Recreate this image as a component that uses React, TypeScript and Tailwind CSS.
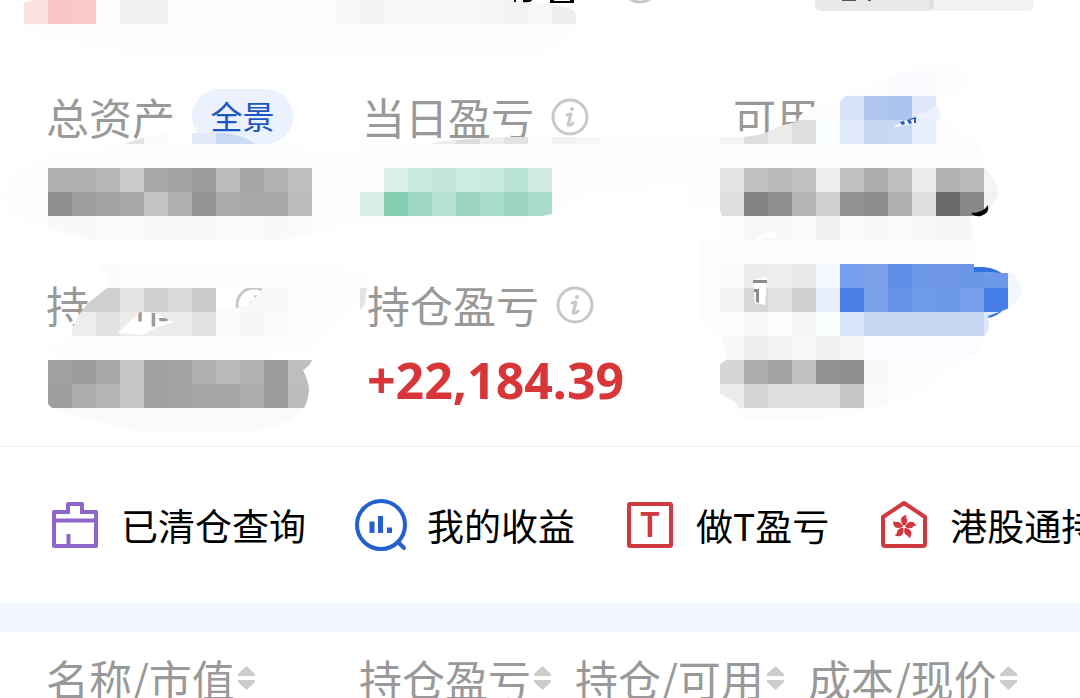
import type { ReactNode } from 'react'

const CELL = 24

type MosaicRow = { x: number; y: number; colors: string[] }

const topRows: MosaicRow[] = [
  { x: 24, y: 0, colors: ['#fbe2e2', '#f8c5c7', '#f9c9cb', '#fffcfc', '#f1f1f1', '#f0f0f0'] },
  {
    x: 336,
    y: 0,
    colors: ['#f9f9f9', '#f3f3f3', '#f7f7f7', '#f7f7f7', '#f7f7f7', '#f9f9f9', '#f5f5f5', '#f3f3f3', '#f8f8f8', '#efefef'],
  },
]

const totalRows: MosaicRow[] = [
  { x: 120, y: 120, colors: ['#e4e4e4', '#fafafa', '#ffffff', '#e3ebfb', '#c9d8f4', '#ccdaf3'] },
  {
    x: 48,
    y: 168,
    colors: ['#b0b0b0', '#b0b0b0', '#b8b8b8', '#cbcbcb', '#a8a8a8', '#a3a3a3', '#9b9b9b', '#bdbdbd', '#a5a5a5', '#b2b2b2', '#bfbfbf'],
  },
  {
    x: 48,
    y: 192,
    colors: ['#8e8e8e', '#9d9d9d', '#a2a2a2', '#a9a9a9', '#c4c4c4', '#b0b0b0', '#959595', '#ababab', '#a7a7a7', '#a9a9a9', '#bdbdbd'],
  },
  {
    x: 48,
    y: 216,
    colors: ['#f9f9f9', '#f9f9f9', '#fafafa', '#fbfbfb', '#f9f9f9', '#f9f9f9', '#f8f8f8', '#fafafa', '#fafafa', '#f9f9f9', '#fafafa'],
  },
]

const todayRows: MosaicRow[] = [
  { x: 432, y: 120, colors: ['#ececec', '#dedede', '#eeeeee', '#e3e3e3', '#fdfdfd', '#f2f2f2', '#f7f7f7'] },
  { x: 384, y: 168, colors: ['#d9f0e7', '#c9eade', '#c2e7da', '#cdece2', '#c6eadf', '#b7e2d4', '#cfebe1'] },
  { x: 360, y: 192, colors: ['#d8efe7', '#85cdb1', '#9dd6c2', '#b5e0d2', '#9cd6c2', '#aadccb', '#9ad4be', '#aadccb'] },
]

const availableRows: MosaicRow[] = [
  { x: 888, y: 72, colors: ['#f8fafe', '#f8fafe'] },
  { x: 840, y: 96, colors: ['#d8e3f8', '#b0c6ed', '#abc4ee', '#dfe8f9'] },
  { x: 720, y: 120, colors: ['#f5f5f5', '#dedede', '#ebebeb', '#dedede', '#fafdff', '#e0e9fb', '#c5d6f3', '#c9d9f5', '#e6edfc'] },
  {
    x: 720,
    y: 168,
    colors: ['#e5e5e5', '#c1c1c1', '#bababa', '#c0c0c0', '#ededed', '#c2c2c2', '#adadad', '#bebebe', '#ebeded', '#b2b2b2', '#b9b9b9', '#f5f5f5'],
  },
  {
    x: 720,
    y: 192,
    colors: ['#dedede', '#828282', '#8e8e8e', '#b5b5b5', '#cfcfcf', '#929292', '#8c8c8c', '#b0b0b0', '#dfdfdf', '#696969', '#888888', '#f2f2f2'],
  },
]

const availableTail: MosaicRow[] = [
  {
    x: 720,
    y: 216,
    colors: ['#fcfcfc', '#f7f7f7', '#f8f8f8', '#fafafa', '#f0f0f0', '#fafafa', '#f8f8f8', '#fafafa', '#f9f9f9', '#f6f6f6', '#f6f6f6'],
  },
]

const marketRows: MosaicRow[] = [
  { x: 72, y: 264, colors: ['#fdfdfd', '#fbfbfb', '#fefefe', '#fcfcfc'] },
  { x: 72, y: 288, colors: ['#d0d0d0', '#cfcfcf', '#e4e4e4', '#cfcfcf', '#dbdbdb', '#cccccc', '#fcfcfc', '#f8f8f8', '#f7f7f7'] },
  { x: 72, y: 312, colors: ['#ededed', '#e2e2e2', '#ececec', '#ececec', '#ececec', '#e2e2e2', '#fafafa', '#f5f5f5', '#fafafa'] },
]

const marketValueRows: MosaicRow[] = [
  {
    x: 48,
    y: 360,
    colors: ['#a0a0a0', '#9b9b9b', '#a9a9a9', '#c6c6c6', '#a0a0a0', '#a4a4a4', '#afafaf', '#bababa', '#b2b2b2', '#9b9b9b', '#bebebe'],
  },
  {
    x: 48,
    y: 384,
    colors: ['#9d9d9d', '#adadad', '#b5b5b5', '#c5c5c5', '#a1a1a1', '#a3a3a3', '#a6a6a6', '#a6a6a6', '#acacac', '#9b9b9b', '#bdbdbd'],
  },
]

const withdrawRows: MosaicRow[] = [
  {
    x: 720,
    y: 264,
    colors: ['#fafafa', '#ececec', '#eeeeee', '#e9e9e9', '#f4faff', '#789fed', '#7b9fe8', '#5f8ee7', '#6e99e8', '#6e98e7', '#6b96e6', '#6e98e9', '#f3f6fe'],
  },
  {
    x: 720,
    y: 288,
    colors: ['#f4f4f4', '#d7d7d7', '#e1e1e1', '#cfcfcf', '#e9f0fb', '#4a80e8', '#7ba1e8', '#6694e8', '#6f9ae8', '#6c96e7', '#779ee8', '#467ce6', '#f3f6fe'],
  },
  {
    x: 720,
    y: 312,
    colors: ['#fdfdfd', '#f7f7f7', '#fcfcfc', '#f6f6f6', '#fcffff', '#dbe5fa', '#c8d7f4', '#c8d7f4', '#c8d7f4', '#c8d7f4', '#c8d7f4', '#dfe8fa'],
  },
  { x: 720, y: 336, colors: ['#f9f9f9', '#ededed', '#f4f4f4', '#f9f9f9', '#f0f0f0', '#f4f6f7', '#fbfcff', '#fbfcff', '#fbfcff', '#fbfcff', '#fbfcff'] },
  { x: 720, y: 360, colors: ['#d6d6d6', '#adadad', '#a3a3a3', '#c2c2c2', '#929292', '#8d908f', '#f7f7f7'] },
  { x: 720, y: 384, colors: ['#ebebeb', '#d5d5d5', '#e0e0e0', '#e0e0e0', '#e0e0e0', '#c5c5c5', '#fafafa'] },
]

const Mosaic = ({ id, shape, rows, base = '#fdfdfd' }: { id: string; shape: string; rows: MosaicRow[]; base?: string }) => (
  <>
    <clipPath id={id}>
      <path d={shape} clipRule="evenodd" />
    </clipPath>
    <g clipPath={`url(#${id})`}>
      <path d={shape} fill={base} fillRule="evenodd" />
      {rows.map((row) =>
        row.colors.map((color, i) => (
          <rect key={`${row.y}-${row.x}-${i}`} x={row.x + i * CELL} y={row.y} width={CELL} height={CELL} fill={color} />
        )),
      )}
    </g>
  </>
)

// Brushed mosaic that hides the private amounts
const PrivacyMask = () => (
  <svg className="absolute left-0 top-0 pointer-events-none" width="1080" height="446" viewBox="0 0 1080 446" aria-hidden="true">
    {/* bottom edge of the account bar */}
    <circle cx="640" cy="-15" r="17" fill="none" stroke="#c8c8c8" strokeWidth="3" />
    <path d="M929 0h105v5q0 6-6 6h-99z" fill="#f3f3f3" />
    <path d="M815 0h119v5q0 6-6 6H821q-6 0-6-6z" fill="#e9e9e9" />
    <path d="M929 0h5v9h-5z" fill="#e0e0e0" />
    <path d="M842 0h14v1h-14zM868 0h3v1h-3z" fill="#555" />
    <Mosaic id="mask-top" shape="M24 3L32 0H520L566 7Q576 9 576 15V26Q580 40 530 60H150L60 44L24 34Z" rows={topRows} base="#fefefe" />
    <path d="M514 0h2v2h-2zM523 0h9q-1 3-9 2zM550 0h4v1h16v-1h4v3h-24z" fill="#000" />

    <Mosaic
      id="mask-total"
      shape="M2 196Q10 160 80 149L118 148Q138 135 180 133H225Q245 135 258 146L340 150V228Q300 235 285 240H90Q60 232 20 218Q4 208 2 196Z"
      rows={totalRows}
    />
    <Mosaic id="mask-today" shape="M340 150L425 144Q470 137 520 137H640L720 142V180L590 194L552 214L530 219Q430 232 340 225Z" rows={todayRows} />
    <Mosaic
      id="mask-available"
      shape="M690 138L740 137Q764 136 771 130Q780 125 797 122Q801 110 814 106L840 102Q850 89 866 89Q920 58 955 62Q972 68 965 88L938 105Q944 112 941 120L980 144L985 168Q999 180 998 196Q992 208 978 216H722L720 210L690 205Z"
      rows={availableRows}
    />
    <Mosaic id="mask-available-tail" shape="M722 216H970L973 240H720ZM757 236L775 231L776 236L757 240Z" rows={availableTail} />
    <path d="M971 213Q983 213 988 205Q990 213 981 216Q975 217 971 213Z" fill="#000" />
    <path d="M917 115L938 106L940 120L917 119Z" fill="#ecf1fd" />
    <path d="M894 126L914 117V123L896 127Z" fill="#f8fbff" />
    <path d="M900 122l4-1 1 3-3 1zM907 120l3-1 2 4-3 1zM909 119l7-2v6h-2v-4l-4 1z" fill="#2a5cb4" />

    <Mosaic
      id="mask-market"
      shape="M100 264H288L370 270L360 300L310 350L250 360H60L48 352L72 330L78 316L88 303L111 285ZM118 333L140 312L155 313L173 322L155 328L142 335ZM217 288V306Q221 311 230 309L247 306Q255 299 263 288Z"
      rows={marketRows}
    />
    <Mosaic
      id="mask-market-value"
      shape="M48 360H312Q310 366 303 370Q309 382 309 390Q308 402 304 408H52L48 404Z"
      rows={marketValueRows}
    />
    <path d="M52 408H304Q290 425 255 432H140Q90 422 52 408Z" fill="#fafafa" />
    <path d="M360 288H367L365 304L360 310Z" fill="#e4e4e4" />

    <path d="M974 267H984Q1010 270 1010 292Q1008 314 988 318L974 318Z" fill="#356fdc" />
    <Mosaic
      id="mask-withdraw"
      shape="M700 240H974V272H984L1002 273H1012Q1020 280 1021 290Q1020 304 1007 309L988 316Q991 330 984 336Q984 352 965 360L940 374L925 392L885 406L862 413L820 419H745L735 402L720 394V364L726 360L722 336L700 325Z"
      rows={withdrawRows}
    />
    <path d="M753 280L767 277L765 305L755 303Z" fill="#fff" />
    <path d="M753 280H767V283H753ZM754 289H759V303L756 302V292H754Z" fill="#8c8c8c" />
    <path d="M735 408H864V412L820 419H745Z" fill="#fcfcfc" />
  </svg>
)

const InfoButton = ({ label }: { label: string }) => (
  <button type="button" aria-label={label} className="cursor-pointer">
    <svg width="38" height="38" viewBox="0 0 38 38" fill="none" stroke="#c8c8c8" strokeLinecap="round">
      <circle cx="19" cy="19" r="17" strokeWidth="3" />
      <circle cx="21" cy="11" r="2" fill="#c8c8c8" stroke="none" />
      <path d="M16 17l4-1-3 11q3 1 5-2" strokeWidth="3" strokeLinejoin="round" />
    </svg>
  </button>
)

const Label = ({ text, children }: { text: string; children?: ReactNode }) => (
  <div className="flex items-center gap-[17px] h-[55px] text-[43px] leading-none text-[#999999] whitespace-nowrap">
    <span>{text}</span>
    {children}
  </div>
)

const ClearedIcon = () => (
  <svg width="52" height="52" viewBox="0 0 52 52" fill="none" stroke="#8c66c8" strokeWidth="4" strokeLinejoin="round">
    <path d="M19 15V5H33V15M19 13H5V47H47V13H33" />
    <path d="M5 21.5H47M19.5 35V46" />
  </svg>
)

const ProfitIcon = () => (
  <svg width="52" height="52" viewBox="0 0 52 52" fill="none" stroke="#2460cf" strokeWidth="4" strokeLinecap="round">
    <circle cx="26" cy="26" r="24" />
    <path d="M43 43l6 6" />
    <path d="M17 22.5V34M25.5 17V34M34.5 28.5V34" strokeWidth="5" strokeLinecap="butt" />
  </svg>
)

const TradeIcon = () => (
  <svg width="52" height="52" viewBox="0 0 52 52">
    <rect x="5" y="5" width="42" height="42" rx="1" fill="none" stroke="#d0393e" strokeWidth="4" />
    <text x="26" y="38" textAnchor="middle" fontSize="34" fontWeight="600" fill="#d0393e" className="font-['Noto_Sans',sans-serif]">
      T
    </text>
  </svg>
)

const HongKongIcon = () => (
  <svg width="52" height="52" viewBox="0 0 52 52">
    <path d="M5 18L26 4L47 18V45Q47 47 45 47H7Q5 47 5 45Z" fill="none" stroke="#d0393e" strokeWidth="4" strokeLinejoin="round" />
    {[0, 72, 144, 216, 288].map((angle) => (
      <path
        key={angle}
        d="M26 27Q21 22 24 18Q26 16 29 16Q27 18 29 20Q30 24 26 27Z"
        transform={`rotate(${angle} 26 28)`}
        fill="#d0393e"
      />
    ))}
  </svg>
)

const links = [
  { label: '已清仓查询', icon: <ClearedIcon /> },
  { label: '我的收益', icon: <ProfitIcon /> },
  { label: '做T盈亏', icon: <TradeIcon /> },
  { label: '港股通持仓', icon: <HongKongIcon /> },
]

const columns = [
  { label: '名称/市值', width: 'w-[313px]' },
  { label: '持仓盈亏', width: 'w-[216px]' },
  { label: '持仓/可用', width: 'w-[233px]' },
  { label: '成本/现价', width: '' },
]

const App = () => {
  return (
    <main className="h-screen overflow-hidden bg-white font-['Noto_Sans_CJK_SC',sans-serif]">
      <section className="relative pt-[89px] pb-[42px] pl-[46px] border-b border-[#ececec] overflow-hidden">
        <div className="grid grid-cols-[316px_371px_1fr] mb-[61px]">
          <div className="h-[127px]">
            <Label text="总资产">
              <button
                type="button"
                className="w-[101px] h-[55px] pb-[3px] rounded-full bg-[#ebf1fd] text-[32px] leading-none text-[#1c56c0] cursor-pointer"
              >
                全景
              </button>
            </Label>
          </div>
          <Label text="当日盈亏">
            <InfoButton label="当日盈亏说明" />
          </Label>
          <Label text="可用" />
        </div>
        <div className="grid grid-cols-[321px_1fr]">
          <Label text="持仓市值">
            <InfoButton label="持仓市值说明" />
          </Label>
          <div>
            <Label text="持仓盈亏">
              <InfoButton label="持仓盈亏说明" />
            </Label>
            <p className="mt-6 text-[50px] leading-[48px] font-bold text-[#d9363a] font-['Noto_Sans',sans-serif]">+22,184.39</p>
          </div>
        </div>
        <PrivacyMask />
      </section>

      <nav className="flex items-center gap-[49px] h-[156px] pl-[49px] overflow-hidden">
        {links.map((link) => (
          <a key={link.label} href="#" className="flex shrink-0 items-center gap-5 text-[37px] leading-none text-black whitespace-nowrap">
            {link.icon}
            <span>{link.label}</span>
          </a>
        ))}
      </nav>

      <div className="h-[29px] bg-[#f2f6ff]" />

      <div className="pl-[46px]">
        <table className="w-full table-fixed">
          <thead>
            <tr>
              {columns.map((column) => (
                <th key={column.label} scope="col" className={`${column.width} h-[92px] p-0 font-normal text-left`}>
                  <button type="button" className="flex items-center gap-[3px] text-[43px] leading-none text-[#999999] whitespace-nowrap cursor-pointer">
                    <span>{column.label}</span>
                    <svg width="17" height="24" viewBox="0 0 17 24" fill="#cccccc" aria-hidden="true">
                      <path d="M8.5 0L17 8V10H0V8ZM0 14H17V16L8.5 24L0 16Z" />
                    </svg>
                  </button>
                </th>
              ))}
            </tr>
          </thead>
        </table>
      </div>
    </main>
  )
}

export default App
